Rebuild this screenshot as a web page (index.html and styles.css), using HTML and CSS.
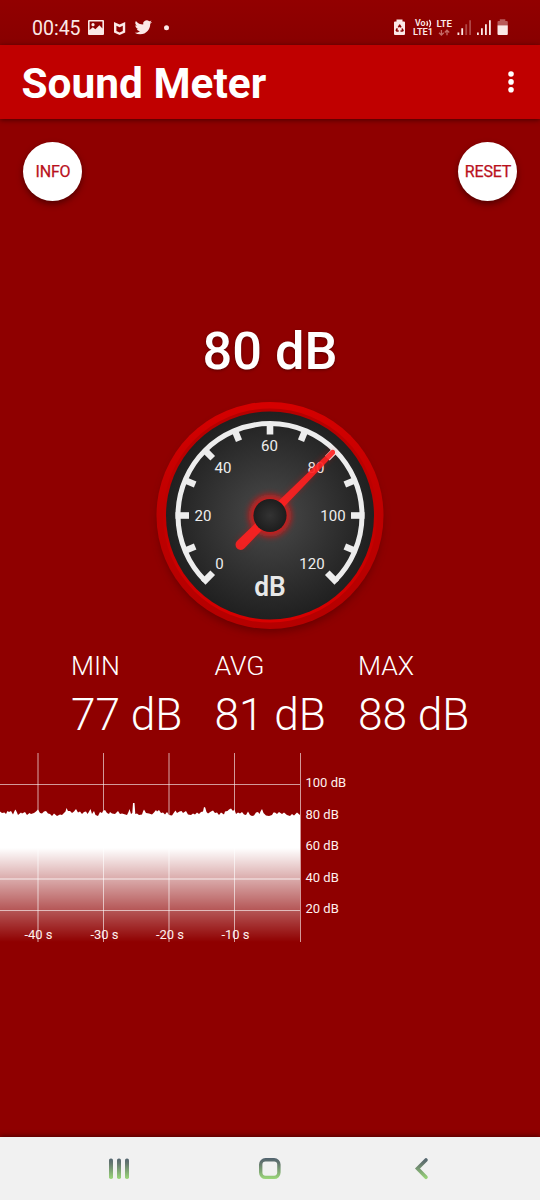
FILE: index.html
```html
<!DOCTYPE html>
<html lang="en">
<head>
<meta charset="utf-8">
<title>Sound Meter</title>
<link rel="stylesheet" href="styles.css">
</head>
<body>
<div class="screen">
  <div class="status">
    <span class="clock">00:45</span>
    <svg class="status-left" width="90" height="28" viewBox="84 14 90 28" fill="#fbe9e7">
      <path fill-rule="evenodd" d="M89 20h14a1 1 0 0 1 1 1v13a1 1 0 0 1-1 1H89a1 1 0 0 1-1-1V21a1 1 0 0 1 1-1zm.6 1.5v8.6l3.2-2.8 2.6 2 4-4 3 3.3v-7.1z"/>
      <circle cx="93" cy="24.7" r="1.6"/>
      <path d="M114 22l5.6 2.6L125.200 22v10.600L119.600 35 114 32.600zM116.400 25.700v5.400l3.200 1.400 3.200-1.400v-5.400l-3.200 1.500z" fill-rule="evenodd"/>
      <path transform="translate(134.700 18.600) scale(.72)" d="M23.950 4.570a10 10 0 0 1-2.820.770 4.960 4.960 0 0 0 2.160-2.720c-.950.550-2 .950-3.130 1.180a4.920 4.920 0 0 0-8.380 4.480A13.930 13.930 0 0 1 1.640 3.160a4.920 4.920 0 0 0 1.520 6.570 4.900 4.900 0 0 1-2.230-.610v.060a4.920 4.920 0 0 0 3.950 4.830 5 5 0 0 1-2.210.080 4.940 4.940 0 0 0 4.600 3.420A9.870 9.870 0 0 1 0 19.540a13.990 13.990 0 0 0 7.550 2.210c9.050 0 14-7.500 14-13.980l-.020-.640a9.940 9.940 0 0 0 2.420-2.560z"/>
      <circle cx="166.500" cy="27.700" r="2.500"/>
    </svg>
    <svg class="status-right" width="126" height="28" viewBox="388 14 126 28" fill="#fbe9e7">
      <path d="M394 22.500a1 1 0 0 1 1-1h1.500v-2h6v2h1.500a1 1 0 0 1 1 1V34a1 1 0 0 1-1 1h-9a1 1 0 0 1-1-1z"/>
      <path d="M398.400 27.300l1.300-2.200 1.300 2.200M402 28.500l1 2-1 .5h-1.500M398.700 31h-1.800l-.6-.7 1-1.900" fill="none" stroke="#8b0000" stroke-width="1.600" stroke-linejoin="round"/>
      <g class="net-text"><text x="415" y="26.400" textLength="10.500" lengthAdjust="spacingAndGlyphs">Vo</text><text x="413" y="35.300" textLength="20" lengthAdjust="spacingAndGlyphs">LTE1</text><text x="436.500" y="26.800" textLength="15.500" lengthAdjust="spacingAndGlyphs">LTE</text></g>
      <path d="M426.800 21q1.500 2.500 0 5M429.300 20q2.500 3.500 0 7" fill="none" stroke="#fbe9e7" stroke-width="1.300"/>
      <path d="M441.400 30v5M439 32.700l2.400 2.400 2.400-2.400M447 35.300v-5M444.800 32.500l2.200-2.400 2.200 2.400" fill="none" stroke="#c56b68" stroke-width="1.300"/>
      <path d="M457.500 32.600h1.800V35h-1.800zM461.300 28.300h1.800V35h-1.800zM477 32.600h1.800V35H477zM481 28.300h1.800V35H481zM485 24.300h1.800V35H485zM489 20.200h1.800V35H489z"/>
      <path fill="#ae4645" d="M465.300 24.300h1.800V35h-1.800zM469.200 20.200h1.800V35h-1.800z"/>
      <path fill="#b95a59" d="M497.500 25v-3a1 1 0 0 1 1-1h1.300v-1.700h5.500V21h1.500a1 1 0 0 1 1 1v3z"/>
      <path d="M497.500 25.300h10.300V34a1 1 0 0 1-1 1h-8.300a1 1 0 0 1-1-1z"/>
    </svg>
  </div>
  <header class="appbar">
    <h1>Sound Meter</h1>
    <svg width="8" height="24" viewBox="0 0 8 24" fill="#fff"><circle cx="4" cy="4" r="2.800"/><circle cx="4" cy="11.900" r="2.800"/><circle cx="4" cy="19.800" r="2.800"/></svg>
  </header>
  <main>
    <div class="actions"><button>INFO</button><button>RESET</button></div>
    <div class="reading">80 dB</div>
    <svg class="gauge" width="260" height="250" viewBox="-130 -125.500 260 250">
      <defs>
        <radialGradient id="face"><stop offset="0" stop-color="#4a4a4a"/><stop offset=".45" stop-color="#373737"/><stop offset="1" stop-color="#202020"/></radialGradient>
        <linearGradient id="rim" x2="0" y2="1"><stop offset="0" stop-color="#d60000"/><stop offset=".5" stop-color="#bd0000"/><stop offset="1" stop-color="#b50000"/></linearGradient>
        <linearGradient id="rimIn" x2="0" y2="1"><stop offset="0" stop-color="#b50000"/><stop offset=".5" stop-color="#c00000"/><stop offset="1" stop-color="#d80000"/></linearGradient>
        <radialGradient id="hub"><stop offset="0" stop-color="#333"/><stop offset="1" stop-color="#1d1d1d"/></radialGradient>
        <filter id="soft" x="-30%" y="-30%" width="160%" height="160%"><feGaussianBlur stdDeviation="4"/></filter>
        <filter id="glow" x="-50%" y="-50%" width="200%" height="200%"><feGaussianBlur stdDeviation="3"/></filter>
      </defs>
      <circle cy="5" r="112" fill="#500000" opacity=".6" filter="url(#soft)"/>
      <circle r="113.500" fill="url(#rim)"/>
      <circle r="107" fill="url(#rimIn)"/>
      <circle r="104" fill="url(#face)"/>
      <g fill="none" stroke="#ededed">
        <path d="M-65.100 65.100A92 92 0 1 1 65.100 65.100" stroke-width="5"/>
        <g stroke-width="6.600">
          <path d="M0-92V-81" /><path d="M0-92V-81" transform="rotate(22.500)"/><path d="M0-92V-81" transform="rotate(45)"/><path d="M0-92V-81" transform="rotate(67.500)"/><path d="M0-94.500V-81" transform="rotate(90)"/><path d="M0-92V-81" transform="rotate(112.500)"/><path d="M0-94.500V-81" transform="rotate(135)"/>
          <path d="M0-92V-81" transform="rotate(-22.500)"/><path d="M0-92V-81" transform="rotate(-45)"/><path d="M0-92V-81" transform="rotate(-67.500)"/><path d="M0-94.500V-81" transform="rotate(-90)"/><path d="M0-92V-81" transform="rotate(-112.500)"/><path d="M0-94.500V-81" transform="rotate(-135)"/>
        </g>
      </g>
      <g class="scale">
        <text x="-50.500" y="53">0</text><text x="-67" y="5.500">20</text><text x="-47" y="-42.500">40</text><text x="-.5" y="-64.500">60</text><text x="46" y="-42.500">80</text><text x="63" y="5.500">100</text><text x="42" y="53">120</text>
      </g>
      <text class="unit" x="0" y="80.500" textLength="31.500" lengthAdjust="spacingAndGlyphs">dB</text>
      <g filter="url(#glow)" opacity=".75" fill="#ff1010"><circle r="21"/><path d="M-32.500 26L62-66l3 3L-26.500 32.500z" opacity=".5"/></g>
      <path d="M-33 25.500L61.500-65.500Q65.500-66.500 65-62L-25.500 32.800A5.200 5.200 0 0 1-33 25.500z" fill="#ff2020" opacity=".9"/>
      <circle r="16.600" fill="url(#hub)"/>
    </svg>
    <section class="stats">
      <div><span>MIN</span><strong>77 dB</strong></div>
      <div><span>AVG</span><strong>81 dB</strong></div>
      <div><span>MAX</span><strong>88 dB</strong></div>
    </section>
    <svg class="chart" width="360" height="190" viewBox="0 753 360 190">
      <defs><linearGradient id="fill" gradientUnits="userSpaceOnUse" x1="0" y1="848" x2="0" y2="942"><stop offset="0" stop-color="#fff"/><stop offset="1" stop-color="#fff" stop-opacity="0"/></linearGradient></defs>
      <path fill="url(#fill)" d="M0 811.500L2 813 4.500 812.500 6 814 7.500 811 9 812 11 811 13 814.500 14.500 811 15.500 809.500 17 812.500 18 815 21 812.500 22 813.500 25 812 27 815 29.500 813 31 814 34 813 36 811.500 38 809.500 40 813 42 813.500 44 811.500 46 811 48 813.500 50 814 52 816 54 813.500 57 816 60 814.500 62 815 64 813 65.500 811.500 66.500 808 68 811 70 811 72 813 74 811.500 76 809 78 812.500 80 811.500 82 814 84 812 86 811.500 87.500 814 88.500 812.500 90.500 809 92 814 94 811 95.500 815 98 816 100 812 102 813 103 811 105 810 107 813 109 814 110 812 112 813.500 115 814 118 811 120 814 122 813.500 127 815 128.500 812 129.500 809 131 814 132.300 813 133 803 134.500 803 135.300 814 137 813.500 139 815 142 814.500 143 811.500 144 809.500 146 813 149 813.500 152 814.500 154 812.500 156 810 157 811.500 159 810 161 813 163 812.500 165 814.500 167 812 169 815 172 815.500 174 812.500 175.500 810.500 177 813 179.500 811.500 181.500 811 183 813 186 811 188 814.500 191 815 193 813.500 195 814.500 197 812.500 199 814 201 812 203 811.500 204 807 205.200 807.500 206.500 812 208 813.500 211 811.500 213 810.500 215 813 217 812.500 219 815 221 812.500 224 814.500 225 811.500 227.500 811 229 809.500 231 808.500 233 811 234.500 809.500 236 814 238 812.500 240 813.500 242 812 244 814.500 246 815 248 811.500 250 815 252 816 254 815.500 256 812.500 258 812 259.500 814 260.500 811.500 262 809 263.500 813 266 815.500 269 816 272 815 273.500 812.500 275 812.500 277 814 279 812 282 814 284 812.500 287 815 290 816 292 814 294 815.500 297 812.500 300 815V942H0z"/>
      <g stroke="#fff" stroke-opacity=".6" stroke-width="1">
        <path d="M0 784.500H300M0 910.500H300"/><path d="M0 879H300" stroke-opacity=".4" stroke-width="2"/>
        <path d="M103.500 753V942M234.500 753V942M300.500 753V942"/><path d="M38 753V942M169 753V942" stroke-opacity=".33" stroke-width="2"/>
      </g>
      <g class="labels">
        <text x="305.500" y="787">100 dB</text><text x="305.500" y="818.500">80 dB</text><text x="305.500" y="850">60 dB</text><text x="305.500" y="881.500">40 dB</text><text x="305.500" y="913">20 dB</text>
        <g text-anchor="middle"><text x="38.500" y="939">-40 s</text><text x="104.500" y="939">-30 s</text><text x="170" y="939">-20 s</text><text x="235.500" y="939">-10 s</text></g>
      </g>
    </svg>
  </main>
  <nav class="navbar">
    <svg width="540" height="63" viewBox="0 1137 540 63" fill="none" stroke="url(#nav)" stroke-linecap="round">
      <defs><linearGradient id="nav" gradientUnits="userSpaceOnUse" x1="0" y1="1158" x2="0" y2="1179"><stop offset="0" stop-color="#52636f"/><stop offset=".25" stop-color="#64766f"/><stop offset="1" stop-color="#9bd879"/></linearGradient></defs>
      <g fill="url(#nav)" stroke="none"><rect x="109" y="1158.500" width="4" height="20.500" rx="1.800"/><rect x="117" y="1158.500" width="4" height="20.500" rx="1.800"/><rect x="125" y="1158.500" width="4" height="20.500" rx="1.800"/></g>
      <rect x="260.700" y="1159.700" width="18.200" height="17.700" rx="4.800" stroke-width="3.400"/>
      <path d="M426 1160l-8.500 8.600 8.500 8.700" stroke-width="3.600"/>
    </svg>
  </nav>
</div>
</body>
</html>
```
FILE: styles.css
```css
* { box-sizing: border-box; }
body { margin: 0; font-family: Roboto, sans-serif; color: #fff; }
.screen { width: 540px; height: 1200px; display: flex; flex-direction: column; background: #8f0000; overflow: hidden; }
.status { height: 45px; flex: none; display: flex; padding: 14px 26px 0 32px; background: linear-gradient(#920000, #880000); }
.clock { width: 52px; font-size: 19.5px; line-height: 29px; color: #fbe9e7; }
.status svg { flex: none; }
.status-right { margin-left: auto; }
.net-text { font-size: 8.8px; font-weight: 600; }
.appbar { height: 74px; flex: none; display: flex; align-items: center; justify-content: space-between; padding: 0 25px 0 21.5px; background: #c00000; box-shadow: 0 1px 5px rgba(50, 0, 0, .8); z-index: 1; }
h1 { margin: 3px 0 0; font-size: 42.4px; line-height: 48px; font-weight: 700; }
main { flex: 1; display: flex; flex-direction: column; }
.actions { display: flex; justify-content: space-between; padding: 23px 23px 0; }
.actions button { width: 59px; height: 59px; padding: 0 0 0 1px; border: 0; border-radius: 50%; background: #fff; color: #b9101c; font: 400 16px Roboto, sans-serif; letter-spacing: -.2px; -webkit-text-stroke: .25px #b9101c; white-space: nowrap; box-shadow: 0 3px 6px rgba(50, 0, 0, .65); }
.reading { margin-top: 118px; height: 64px; text-align: center; font-size: 52.3px; line-height: 65px; font-weight: 500; text-shadow: 0 1px 3px rgba(40, 0, 0, .5); }
.gauge { margin: 7px auto 0; flex: none; }
.scale { fill: #eee; font-size: 15px; text-anchor: middle; }
.unit { fill: #e8e8e8; font-size: 28.5px; font-weight: 600; text-anchor: middle; }
.stats { display: flex; height: 113px; padding: 10px 0 0 71px; }
.stats div { width: 143.5px; display: flex; flex-direction: column; font-weight: 300; }
.stats span { font-size: 26.6px; line-height: 32px; }
.stats strong { margin-top: 6px; font-size: 44.2px; line-height: 54px; font-weight: 300; white-space: nowrap; }
.chart { flex: none; }
.labels { fill: #fff1ee; font-size: 13px; }
.navbar { height: 63px; flex: none; background: #f1f1f1; box-shadow: 0 -1px 5px rgba(50, 0, 0, .7); }
.navbar svg { display: block; }
```
